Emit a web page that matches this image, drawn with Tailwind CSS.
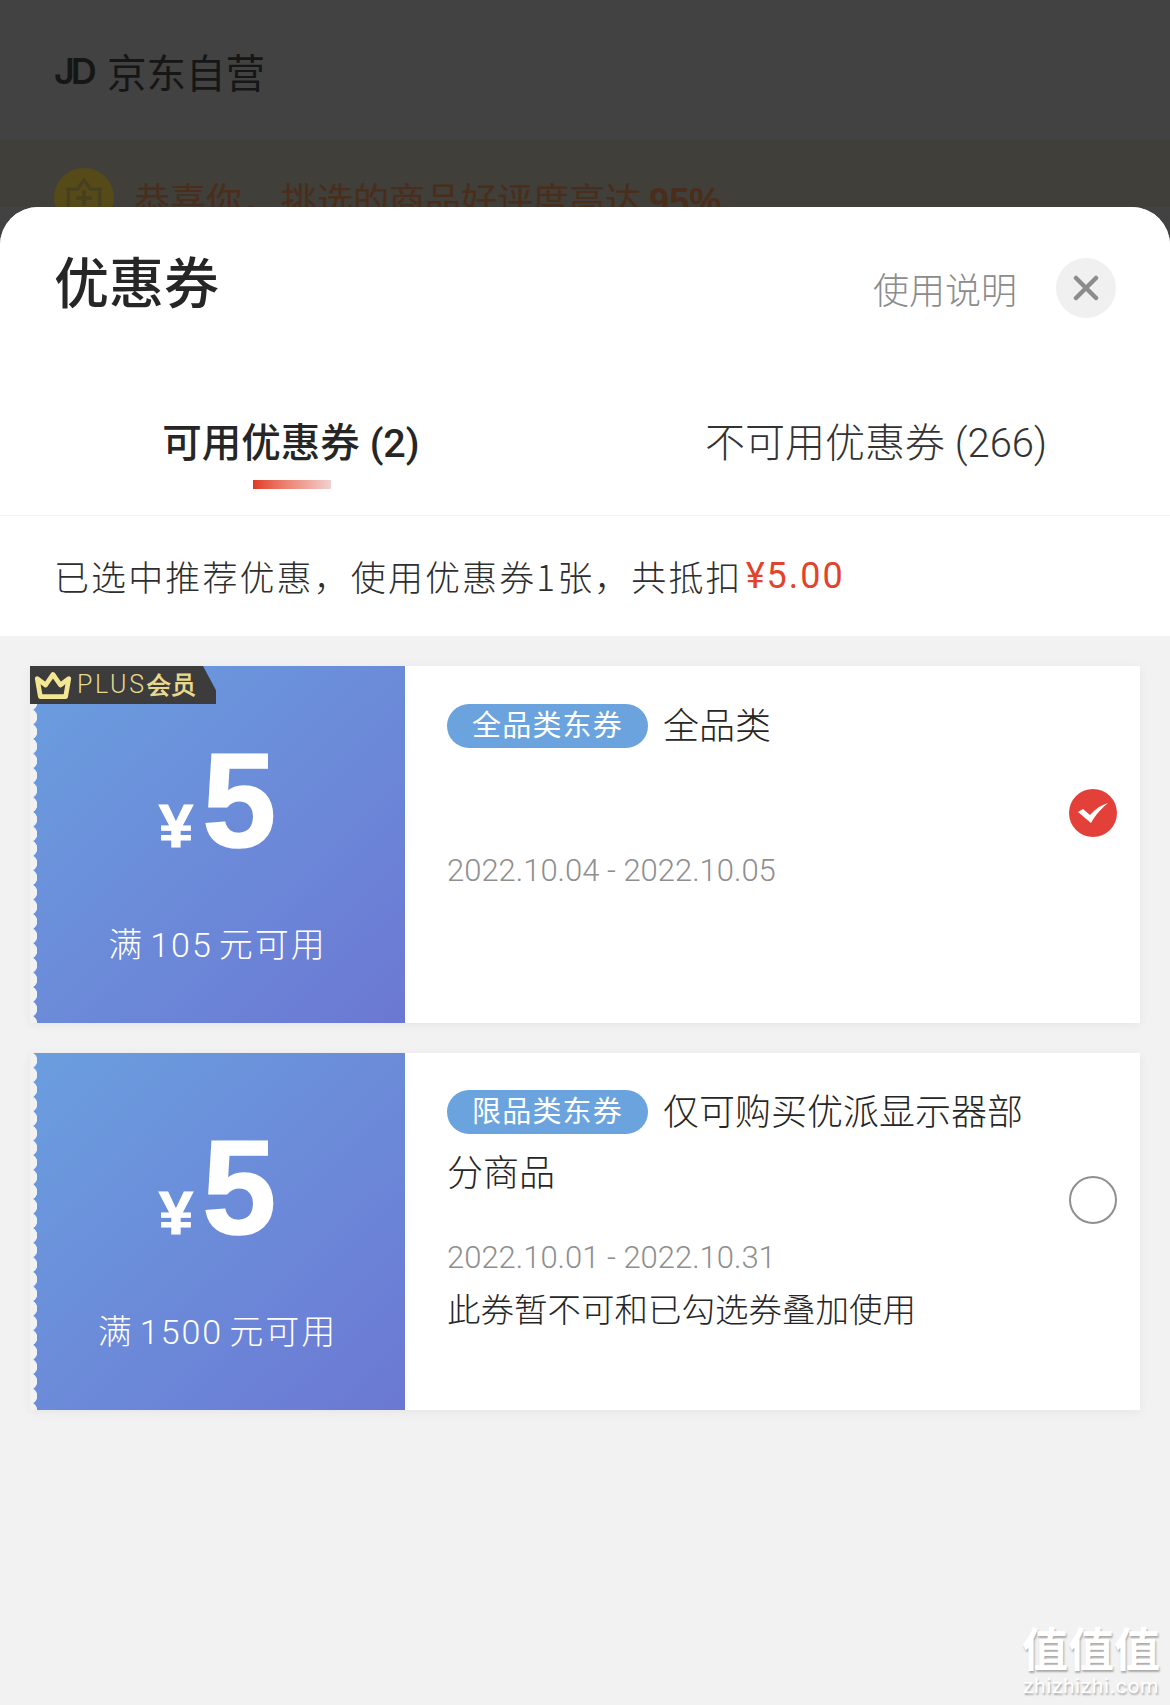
<!DOCTYPE html>
<html lang="zh"><head><meta charset="utf-8">
<script src="https://cdn.jsdelivr.net/npm/@tailwindcss/browser@4"></script>
</head>
<body class="m-0">
<div class="relative w-[1170px] h-[1705px] overflow-hidden bg-[#424242] font-['Roboto','Noto_Sans_CJK_SC',sans-serif]">
  <header class="h-[207px] overflow-hidden">
    <div class="h-[140px] pl-[54px] pt-[46px] flex items-start gap-[14px] text-[#161616]">
      <span class="font-['Inter',sans-serif] font-semibold text-[36px] leading-[50px] tracking-[-4px]">JD</span>
      <span class="text-[39.5px] leading-[50px] font-['Noto_Sans_CJK_SC',sans-serif]">京东自营</span>
    </div>
    <div class="h-[67px] bg-[#403f39] pl-[54px] pt-[28px] flex items-start gap-[20px]">
      <div class="shrink-0 w-[60px] h-[60px] rounded-full bg-[#564a18] flex items-center justify-center">
        <svg width="38" height="44" viewBox="0 0 34 38" fill="none" stroke="#47401f" stroke-width="3"><path d="M3 11h8l6-8 6 8h8v24H3z"/><path d="M17 12v14M10 19h14"/></svg>
      </div>
      <span class="text-[36px] leading-[60px] text-[#4a2d1a] font-['Noto_Sans_CJK_SC',sans-serif] whitespace-nowrap">恭喜你，<span class="ml-[3px]">挑选的商品好评度高达</span> <span class="font-bold font-['Liberation_Sans',sans-serif]">95%</span></span>
    </div>
  </header>

  <section class="h-[1498px] bg-[#f2f2f2] rounded-t-[38px] overflow-hidden flex flex-col">
    <div class="bg-white">
      <div class="h-[133px] pl-[54px] pr-[54px] flex items-start justify-between">
        <h1 class="mt-[37px] text-[55px] leading-[70px] font-medium text-[#262626] font-['Noto_Sans_CJK_SC',sans-serif]">优惠券</h1>
        <div class="mt-[51px] flex items-center gap-[39px]">
          <span class="text-[36px] leading-[60px] font-light text-[#8c8c8c] font-['Noto_Sans_CJK_SC',sans-serif]">使用说明</span>
          <button class="w-[60px] h-[60px] rounded-full bg-[#f0f0f0] flex items-center justify-center">
            <svg width="26" height="26" viewBox="0 0 26 26" fill="none" stroke="#8c8c8c" stroke-width="4.5" stroke-linecap="round"><path d="M3 3l20 20M23 3L3 23"/></svg>
          </button>
        </div>
      </div>
      <div class="grid grid-cols-2 h-[176px] border-b border-[#f2f2f2]">
        <div class="flex flex-col items-center pt-[77px] pr-[3px]">
          <span class="text-[39.5px] leading-[54px] font-medium text-[#262626] whitespace-nowrap">可用优惠券 (2)</span>
          <div class="mt-[9px] ml-[2px] w-[78px] h-[9px] bg-gradient-to-r from-[#df3a22] to-[#f0d0cf]"></div>
        </div>
        <div class="flex justify-center pt-[77px] pr-[3px]">
          <span class="text-[40px] leading-[54px] font-light text-[#333333] whitespace-nowrap">不可用优惠券 (266)</span>
        </div>
      </div>
      <div class="h-[120px] pl-[54px] flex items-center text-[35px] tracking-[2.1px] font-light text-[#2e2e2e] whitespace-nowrap font-['Noto_Sans_CJK_SC',sans-serif]">
        已选中推荐优惠，使用优惠券1张，共抵扣<span class="ml-[3px] text-[#e2432c] font-['Roboto',sans-serif] font-normal tracking-[2px] text-[36px]">¥5.00</span>
      </div>
    </div>

    <div class="flex flex-col gap-[30px] pt-[30px] pl-[30px] pr-[30px]">
      <article class="relative h-[357px] flex bg-white shadow-[0_2px_10px_rgba(0,0,0,0.06)]">
        <div class="relative w-[375px] shrink-0 bg-gradient-to-br from-[#6a9edf] to-[#6b78d3] text-white flex flex-col items-center">
          <div class="absolute left-0 top-0 bottom-0 w-[7px] bg-[radial-gradient(circle_at_-1px_50%,#f2f2f2_8px,transparent_8.6px)] bg-[length:7px_14.6px]"></div>
          <div class="mt-[80px] h-[110px] flex items-end gap-[9px]">
            <span class="text-[62px] leading-[60px] font-bold font-['Liberation_Sans',sans-serif] [-webkit-text-stroke:1px_white]">¥</span>
            <span class="text-[133px] leading-[110px] font-bold font-['Liberation_Sans',sans-serif] [-webkit-text-stroke:1.5px_white]">5</span>
          </div>
          <div class="mt-[64px] text-[34px] leading-[50px] font-light tracking-[2px] whitespace-nowrap">满<span class="mx-[6px]">105</span>元可用</div>
          <div class="absolute left-0 top-0 w-[186px] h-[38px] bg-[#3c3c3c] [clip-path:polygon(0_0,93%_0,100%_64%,100%_100%,0_100%)] flex items-center pl-[3px] gap-[4px] text-[#e8d98e]">
            <svg width="40" height="30" viewBox="0 0 38 28" fill="none" stroke="#f3e793" stroke-width="4.5" stroke-linejoin="round"><path d="M4 8l8 6 7-10 7 10 8-6-3 17H7z"/></svg>
            <span class="text-[25px] leading-[38px] tracking-[2.6px] font-light font-['Roboto',sans-serif] whitespace-nowrap">PLUS<span class="font-bold text-[24px] tracking-[0]">会员</span></span>
          </div>
        </div>
        <div class="flex-1 pl-[42px] pt-[31px] pr-[110px]">
          <div class="text-[34px] leading-[61px] font-light text-[#262626]">
            <span class="inline-block align-[3px] w-[201px] h-[44px] rounded-full bg-[#6ba3de] text-white text-center text-[29px] leading-[44px] tracking-[1.2px] font-normal mr-[15px]">全品类东券</span><span class="text-[36px]">全品类</span>
          </div>
          <p class="mt-[91px] text-[31px] leading-[44px] font-light text-[#8f8f8f] whitespace-nowrap">2022.10.04 - 2022.10.05</p>
        </div>
        <div class="absolute right-[23px] top-[123px] w-[48px] h-[48px] rounded-full bg-[#e4403a] flex items-center justify-center">
          <svg width="32" height="26" viewBox="0 0 32 26"><path d="M1 12l5-3 7 6C18 9 24 5 31 3c-6 5-12 11-17 20z" fill="#fff"/></svg>
        </div>
      </article>

      <article class="relative h-[357px] flex bg-white shadow-[0_2px_10px_rgba(0,0,0,0.06)]">
        <div class="relative w-[375px] shrink-0 bg-gradient-to-br from-[#6a9edf] to-[#6b78d3] text-white flex flex-col items-center">
          <div class="absolute left-0 top-0 bottom-0 w-[7px] bg-[radial-gradient(circle_at_-1px_50%,#f2f2f2_8px,transparent_8.6px)] bg-[length:7px_14.6px]"></div>
          <div class="mt-[80px] h-[110px] flex items-end gap-[9px]">
            <span class="text-[62px] leading-[60px] font-bold font-['Liberation_Sans',sans-serif] [-webkit-text-stroke:1px_white]">¥</span>
            <span class="text-[133px] leading-[110px] font-bold font-['Liberation_Sans',sans-serif] [-webkit-text-stroke:1.5px_white]">5</span>
          </div>
          <div class="mt-[64px] text-[34px] leading-[50px] font-light tracking-[2px] whitespace-nowrap">满<span class="mx-[6px]">1500</span>元可用</div>
        </div>
        <div class="flex-1 pl-[42px] pt-[30px] pr-[110px]">
          <div class="text-[36px] leading-[61px] font-light text-[#262626]">
            <span class="inline-block align-[3px] w-[201px] h-[44px] rounded-full bg-[#6ba3de] text-white text-center text-[29px] leading-[44px] tracking-[1.2px] font-normal mr-[15px]">限品类东券</span>仅可购买优派显示器部分商品
          </div>
          <p class="mt-[31px] text-[31px] leading-[44px] font-light text-[#8f8f8f] whitespace-nowrap">2022.10.01 - 2022.10.31</p>
          <p class="mt-[9px] text-[33.5px] leading-[44px] font-light text-[#262626] whitespace-nowrap">此券暂不可和已勾选券叠加使用</p>
        </div>
        <div class="absolute right-[23px] top-[123px] w-[48px] h-[48px] rounded-full border-2 border-[#8f8f8f]"></div>
      </article>
    </div>
  </section>

  <div class="absolute left-[1017px] top-[1619px] w-[148px] text-center text-white [text-shadow:1px_2px_2px_rgba(0,0,0,0.3)]">
    <div class="text-[46px] leading-[54px] font-bold whitespace-nowrap font-['Noto_Sans_CJK_SC',sans-serif]">值值值</div>
    <div class="text-[21px] leading-[26px] tracking-[0.6px] whitespace-nowrap font-['Roboto',sans-serif]">zhizhizhi.com</div>
  </div>
</div>
</body></html>
